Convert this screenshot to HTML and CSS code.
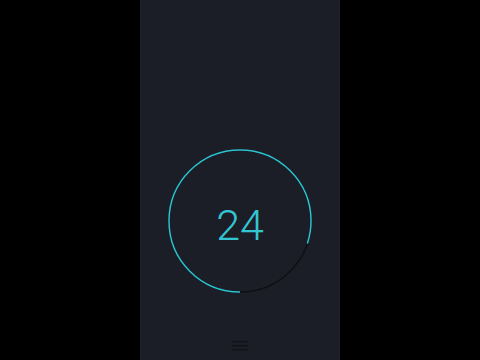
FILE: index.html
```html
<!DOCTYPE html>
<html>
<head>
<meta charset="utf-8">
<link rel="stylesheet" href="styles.css">
</head>
<body>
<div class="screen">
  <div class="timer">
    <svg class="ring" width="144" height="144" viewBox="0 0 144 144">
      <circle class="track" cx="72" cy="72" r="71"/>
      <circle class="progress" cx="72" cy="72" r="71" transform="rotate(90 72 72)"/>
    </svg>
    <div class="count">24</div>
  </div>
  <div class="menu">
    <svg width="16" height="10" viewBox="0 0 16 10">
      <rect x="0" y="0" width="16" height="1.4"/>
      <rect x="0" y="4" width="16" height="1.4"/>
      <rect x="0" y="8" width="16" height="1.4"/>
    </svg>
  </div>
</div>
</body>
</html>
```
FILE: styles.css
```css
html, body {
  margin: 0;
  padding: 0;
  background: #000;
  height: 100%;
}
.screen {
  width: 200px;
  height: 360px;
  margin: 0 auto;
  background: #1b1e26;
  border-left: 1px solid #21212b;
  border-right: 1px solid #21212b;
  display: flex;
  flex-direction: column;
  align-items: center;
  padding-bottom: 9px;
  box-sizing: border-box;
}
.timer {
  margin-top: 149px;
  display: grid;
  place-items: center;
}
.ring, .count {
  grid-area: 1 / 1;
}
.track {
  fill: none;
  stroke: #0e1015;
  stroke-width: 1.5;
}
.progress {
  fill: none;
  stroke: #2cc3d1;
  stroke-width: 1.5;
  stroke-dasharray: 356.9 446.1;
}
.count {
  font-family: Roboto, "Liberation Sans", sans-serif;
  font-weight: 300;
  font-size: 43px;
  color: #33c6d2;
  line-height: 1;
  padding-top: 8px;
}
.menu {
  margin-top: auto;
  display: flex;
}
.menu rect {
  fill: #0f1218;
}
```
